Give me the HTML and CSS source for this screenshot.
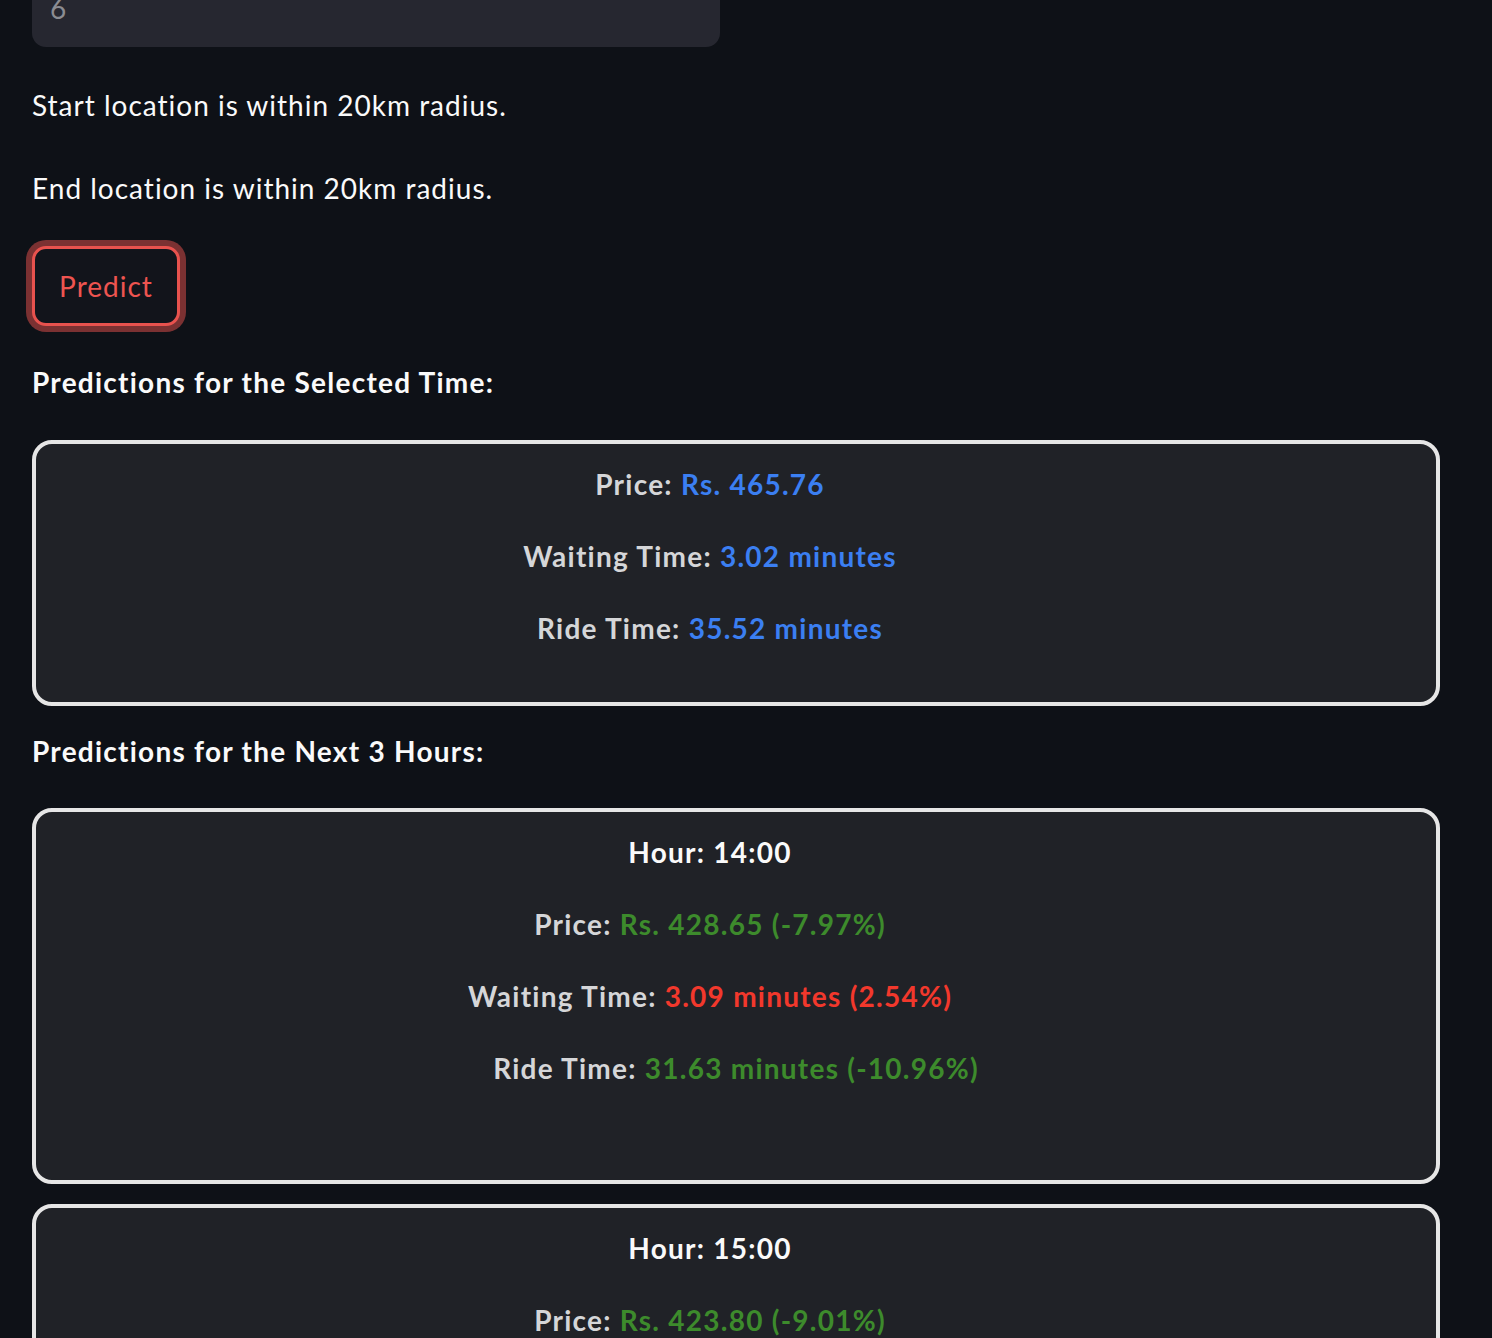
FILE: index.html
```html
<!DOCTYPE html>
<html>
<head>
<meta charset="utf-8">
<link rel="stylesheet" href="styles.css">
</head>
<body>
<main class="page">
  <div class="input-box"><span class="input-value">6</span></div>
  <p class="msg msg-start">Start location is within 20km radius.</p>
  <p class="msg msg-end">End location is within 20km radius.</p>
  <div class="btn-row"><button class="predict-btn">Predict</button></div>
  <h3 class="section-title">Predictions for the Selected Time:</h3>
  <div class="card card-main">
    <p class="line"><span class="label">Price:</span> <span class="blue">Rs. 465.76</span></p>
    <p class="line"><span class="label">Waiting Time:</span> <span class="blue">3.02 minutes</span></p>
    <p class="line"><span class="label">Ride Time:</span> <span class="blue">35.52 minutes</span></p>
  </div>
  <h3 class="section-title section-next">Predictions for the Next 3 Hours:</h3>
  <div class="cards">
    <div class="card card-hour">
      <p class="line shift hour">Hour: 14:00</p>
      <p class="line shift"><span class="label">Price:</span> <span class="green">Rs. 428.65 (-7.97%)</span></p>
      <p class="line shift"><span class="label">Waiting Time:</span> <span class="red">3.09 minutes (2.54%)</span></p>
      <p class="line"><span class="label">Ride Time:</span> <span class="green">31.63 minutes (-10.96%)</span></p>
    </div>
    <div class="card card-hour">
      <p class="line shift hour">Hour: 15:00</p>
      <p class="line shift"><span class="label">Price:</span> <span class="green">Rs. 423.80 (-9.01%)</span></p>
      <p class="line shift"><span class="label">Waiting Time:</span> <span class="red">3.11 minutes (3.20%)</span></p>
      <p class="line"><span class="label">Ride Time:</span> <span class="green">32.40 minutes (-8.78%)</span></p>
    </div>
  </div>
</main>
</body>
</html>
```
FILE: styles.css
```css
html, body {
  margin: 0;
  padding: 0;
  background: #0e1117;
  height: 1338px;
  overflow: hidden;
}
body {
  font-family: Lato, "Source Sans Pro", "Noto Sans", sans-serif;
  color: #fafafa;
  font-size: 28px;
  letter-spacing: 1px;
  font-variant-ligatures: none;
}
.page {
  width: 1408px;
  padding-left: 32px;
  display: flex;
  flex-direction: column;
}
.input-box {
  width: 688px;
  height: 47px;
  background: #262730;
  border-radius: 0 0 14px 14px;
  overflow: hidden;
  box-sizing: border-box;
  padding-left: 18px;
}
.input-value {
  display: block;
  margin-top: -12px;
  line-height: 40px;
  color: #8b8c92;
}
.msg {
  margin: 0;
  line-height: 45px;
}
.msg-start { margin-top: 36px; }
.msg-end { margin-top: 38px; }
.btn-row {
  margin-top: 35px;
  display: flex;
}
.predict-btn {
  width: 148px;
  height: 80px;
  box-sizing: border-box;
  background: #12141b;
  border: 3px solid #e8524e;
  border-radius: 14px;
  box-shadow: 0 0 0 6px rgba(232, 82, 78, 0.5);
  color: #ee5450;
  font-family: inherit;
  font-size: 28px;
  letter-spacing: 1px;
  padding: 0;
}
.section-title {
  margin: 34px 0 0;
  font-size: 28px;
  font-weight: 700;
  line-height: 45px;
  letter-spacing: 1.25px;
  color: #fafafa;
}
.section-next { margin-top: 23px; }
.card {
  box-sizing: border-box;
  width: 1408px;
  background: #202227;
  border: 4px solid #e6e6e6;
  border-radius: 20px;
  display: flex;
  flex-direction: column;
  align-items: center;
  padding: 18px 0 24px;
}
.card-main { margin-top: 35px; }
.cards {
  margin-top: 34px;
  display: flex;
  flex-direction: column;
  gap: 20px;
}
.card-hour { padding-bottom: 62px; }
.line {
  margin: 0 0 27px;
  line-height: 45px;
  font-weight: 700;
  letter-spacing: 1.25px;
  text-align: center;
}
.card-main .line { padding-right: 52px; }
.line.shift { padding-right: 52px; }
.label { color: #d5d6d8; }
.hour { color: #fafafa; }
.blue { color: #3b7ff2; }
.green { color: #3d8b2c; }
.red { color: #f2382c; }
```
